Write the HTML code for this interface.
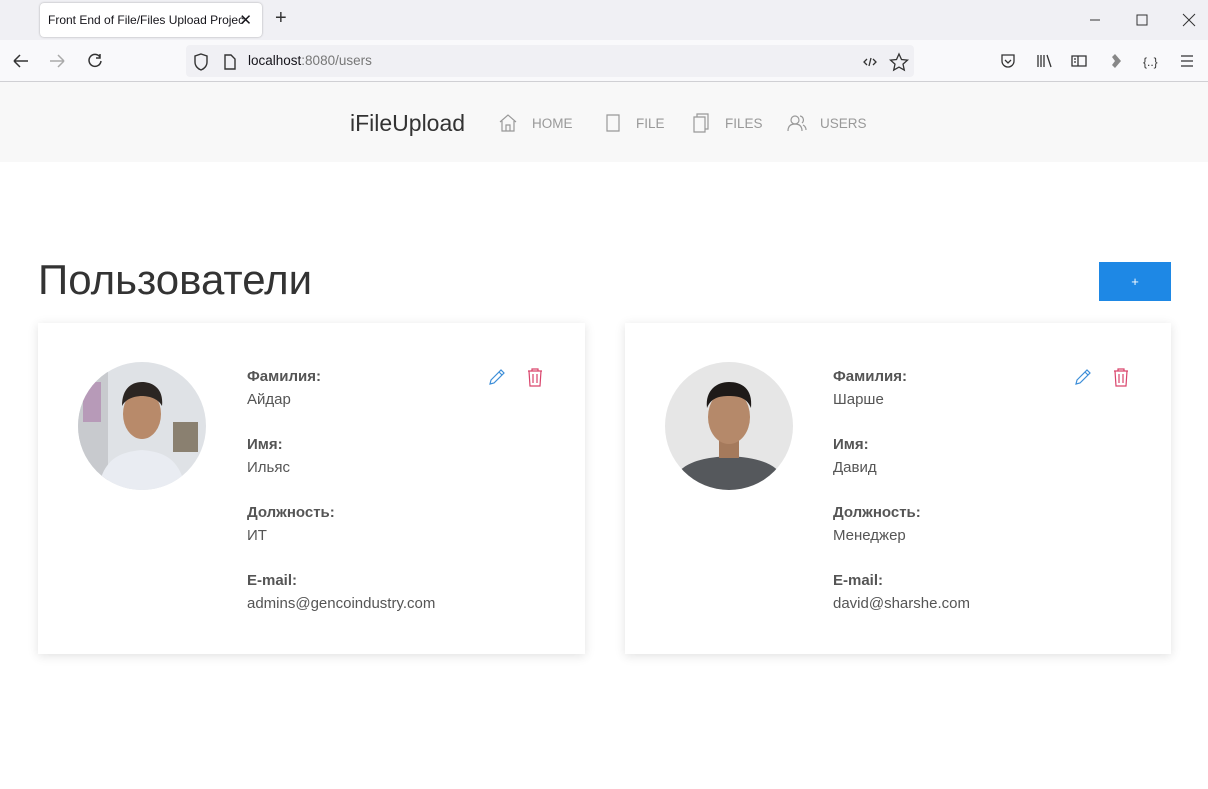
<!DOCTYPE html>
<html><head><meta charset="utf-8"><style>
*{box-sizing:border-box;margin:0;padding:0}
body{width:1208px;height:789px;overflow:hidden;background:#fff;font-family:"Liberation Sans","DejaVu Sans",sans-serif;position:relative}
.abs{position:absolute}
.tabs{left:0;top:0;width:1208px;height:40px;background:#f0f0f4}
.tab{left:40px;top:3px;width:222px;height:34px;background:#fff;border-radius:4px;box-shadow:0 0 2px rgba(0,0,0,.3);font-size:12px;color:#15141a;padding:10px 8px;white-space:nowrap;overflow:hidden}
.tool{left:0;top:40px;width:1208px;height:42px;background:#f9f9fb;border-bottom:1px solid #d0d0d4}
.url{left:186px;top:45px;width:728px;height:32px;background:#f0f0f4;border-radius:4px;font-size:13.5px;color:#15141a;padding:8px 0 0 62px}
.nav{left:0;top:82px;width:1208px;height:80px;background:#f8f8f8}
.brand{left:350px;top:110px;font-size:23px;color:#333}
.ni{top:116px;font-size:13.5px;color:#999}
h1{position:absolute;left:38px;top:256px;font-size:42px;font-weight:normal;color:#333}
.btn{left:1099px;top:262px;width:72px;height:39px;background:#1e88e5;color:#fff;font-size:13px;text-align:center;line-height:39px}
.card{top:323px;height:331px;background:#fff;box-shadow:0 2px 10px rgba(0,0,0,.12)}
.lab{font-size:15px;color:#555;line-height:23px}
.lab b{color:#555}
.g{margin-bottom:22px}
</style></head><body>
<div class="abs tabs"></div>
<div class="abs tab">Front End of File/Files Upload Projec<span style="position:absolute;right:10px;top:8px;font-size:15px">✕</span></div>
<div class="abs" style="left:275px;top:7px;font-size:20px;color:#333">+</div>
<svg class="abs" style="left:1085px;top:10px" width="115" height="20" fill="none" stroke="#333" stroke-width="1"><path d="M5 10h10M52 5h10v10H52zM98 4l12 12M110 4L98 16"/></svg>
<div class="abs tool"></div>
<svg class="abs" style="left:10px;top:50px" width="100" height="22" fill="none" stroke="#333" stroke-width="1.5"><path d="M4 11h14M4 11l6-6M4 11l6 6"/><path stroke="#aaa" d="M40 11h14M54 11l-6-6M54 11l-6 6"/><path d="M90 7a6 6 0 1 0 1 4M90 4v4h-4"/></svg>
<div class="abs url">localhost<span style="color:#777">:8080/users</span></div>
<svg class="abs" style="left:193px;top:52px" width="50" height="20" fill="none" stroke="#333" stroke-width="1.4"><path d="M8 2l6 2v6c0 4-3 7-6 8-3-1-6-4-6-8V4z"/><path d="M32 3h6l4 4v10H32z"/></svg>
<svg class="abs" style="left:860px;top:52px" width="50" height="20" fill="none" stroke="#333" stroke-width="1.3"><path d="M7 7l-3 3 3 3M13 7l3 3-3 3M11 6l-2 8"/><path d="M39 2l2.5 5.5 6 .6-4.5 4 1.3 6-5.3-3-5.3 3 1.3-6-4.5-4 6-.6z"/></svg>
<svg class="abs" style="left:995px;top:50px" width="205" height="22" fill="none" stroke="#333" stroke-width="1.3"><path d="M7 5h12v6a6 6 0 0 1-12 0z M10 10l3 3 3-3"/><path d="M43 5v12M46 5v12M49 5v12M52 5l4 12"/><path d="M77 6h14v10H77zM83 6v10M79 9h2M79 12h2"/><path fill="#888" stroke="none" d="M120 4l6 7-6 7-3-3 3-4-3-4z"/><text x="148" y="16" font-size="12" fill="#333" stroke="none" font-family="Liberation Sans">{..}</text><path d="M186 6h12M186 11h12M186 16h12"/></svg>
<div class="abs nav"></div>
<div class="abs brand">iFileUpload</div>
<svg class="abs" style="left:497px;top:112px" width="380" height="22" fill="none" stroke="#999" stroke-width="1.2"><path d="M3 10L11 3l8 7M5 9v10h12V9M9 19v-6h4v6"/><path d="M110 3h12v16H110z"/><path d="M197 5h11v15H197zM200 5V2h11v15h-3"/><circle cx="298" cy="8" r="4"/><path d="M291 19c0-5 3-7 7-7s7 2 7 7M303 4a4 4 0 0 1 2 7M306 13c2 1 3 3 3 5"/></svg>
<div class="abs ni" style="left:532px">HOME</div>
<div class="abs ni" style="left:636px">FILE</div>
<div class="abs ni" style="left:725px">FILES</div>
<div class="abs ni" style="left:820px">USERS</div>
<h1>Пользователи</h1>
<div class="abs btn">+</div>

<div class="abs card" style="left:38px;width:547px"></div>
<div class="abs card" style="left:625px;width:546px"></div>

<svg class="abs" style="left:78px;top:362px" width="128" height="128"><defs><clipPath id="c1"><circle cx="64" cy="64" r="64"/></clipPath></defs><g clip-path="url(#c1)"><rect width="128" height="128" fill="#dfe2e6"/><rect x="0" y="0" width="30" height="128" fill="#c8cace"/><rect x="5" y="20" width="18" height="40" fill="#b79ab8"/><rect x="95" y="60" width="25" height="30" fill="#8a8070"/><path d="M20 128c5-30 20-38 44-40 24 2 38 10 44 40z" fill="#e9ecf2"/><ellipse cx="64" cy="52" rx="19" ry="25" fill="#b88a6a"/><path d="M44 44c0-18 10-24 20-24s22 6 20 24c-4-8-14-10-20-10s-16 2-20 10z" fill="#2b2522"/></g></svg>
<svg class="abs" style="left:665px;top:362px" width="128" height="128"><defs><clipPath id="c2"><circle cx="64" cy="64" r="64"/></clipPath></defs><g clip-path="url(#c2)"><rect width="128" height="128" fill="#e6e6e6"/><path d="M5 128c5-25 25-32 59-34 34 2 54 9 59 34z" fill="#55585c"/><rect x="54" y="78" width="20" height="18" fill="#a57a5c"/><ellipse cx="64" cy="55" rx="21" ry="27" fill="#b5896a"/><path d="M42 46c-2-18 10-26 22-26s24 6 22 26c-4-10-12-12-22-12s-18 2-22 12z" fill="#1e1a18"/></g></svg>

<div class="abs lab" style="left:247px;top:365px">
<div class="g"><b>Фамилия:</b><br>Айдар</div>
<div class="g"><b>Имя:</b><br>Ильяс</div>
<div class="g"><b>Должность:</b><br>ИТ</div>
<div class="g"><b>E-mail:</b><br>admins@gencoindustry.com</div>
</div>
<div class="abs lab" style="left:833px;top:365px">
<div class="g"><b>Фамилия:</b><br>Шарше</div>
<div class="g"><b>Имя:</b><br>Давид</div>
<div class="g"><b>Должность:</b><br>Менеджер</div>
<div class="g"><b>E-mail:</b><br>david@sharshe.com</div>
</div>
<svg class="abs" style="left:486px;top:366px" width="60" height="22" fill="none" stroke-width="1.2"><path stroke="#3d8ed8" d="M4 18l1-4 10-10 3 3-10 10z M13 6l3 3"/><path stroke="#d9436b" d="M42 5h14M46 5V3h6v2M43 5l1 15h10l1-15M47 8v9M51 8v9"/></svg>
<svg class="abs" style="left:1072px;top:366px" width="60" height="22" fill="none" stroke-width="1.2"><path stroke="#3d8ed8" d="M4 18l1-4 10-10 3 3-10 10z M13 6l3 3"/><path stroke="#d9436b" d="M42 5h14M46 5V3h6v2M43 5l1 15h10l1-15M47 8v9M51 8v9"/></svg>
</body></html>
